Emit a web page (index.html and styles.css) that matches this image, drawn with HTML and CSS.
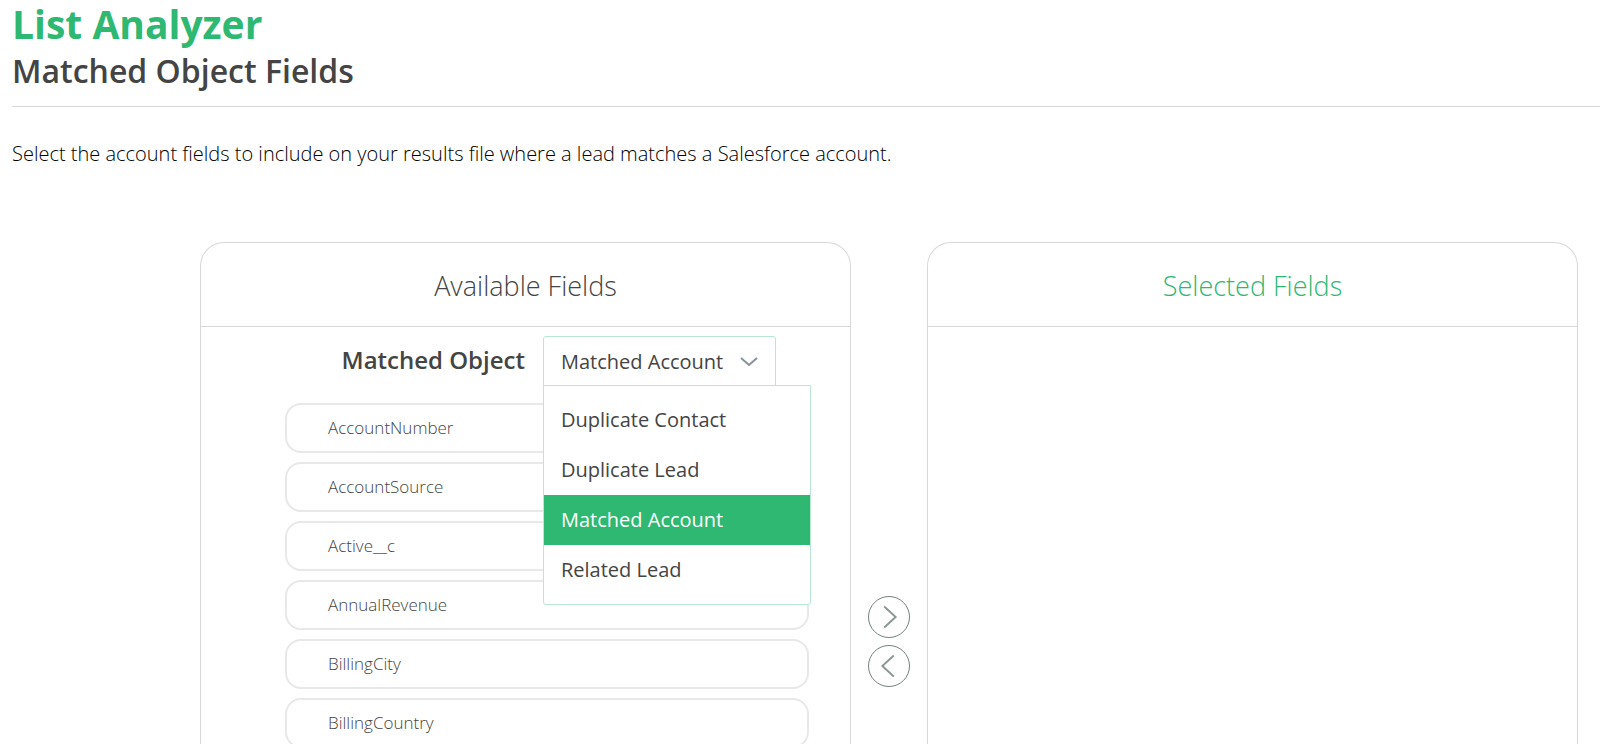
FILE: index.html
```html
<!DOCTYPE html>
<html lang="en">
<head>
    <meta charset="UTF-8">
    <meta name="viewport" content="width=device-width, initial-scale=1.0">
    <title>List Analyzer</title>
    <link rel="stylesheet" href="styles.css">
</head>
<body>

<header class="page-header">
    <h1>List Analyzer</h1>
    <h2>Matched Object Fields</h2>
</header>

<p class="intro">Select the account fields to include on your results file where a lead matches a Salesforce account.</p>

<main class="picker">
    <section class="panel">
        <h3>Available Fields</h3>
        <div class="object-row">
            <label for="matched-object">Matched Object</label>
            <div class="dropdown">
                <select id="matched-object">
                    <option>Duplicate Contact</option>
                    <option>Duplicate Lead</option>
                    <option selected>Matched Account</option>
                    <option>Related Lead</option>
                </select>
                <svg class="chevron" viewBox="0 0 18 10" aria-hidden="true"><path d="M1 1l8 7 8-7"/></svg>
                <ul class="dropdown-menu">
                    <li><button type="button">Duplicate Contact</button></li>
                    <li><button type="button">Duplicate Lead</button></li>
                    <li><button type="button" class="active">Matched Account</button></li>
                    <li><button type="button">Related Lead</button></li>
                </ul>
            </div>
        </div>
        <ul class="field-list">
            <li>AccountNumber</li>
            <li>AccountSource</li>
            <li>Active__c</li>
            <li>AnnualRevenue</li>
            <li>BillingCity</li>
            <li>BillingCountry</li>
        </ul>
    </section>

    <div class="move-buttons">
        <button type="button" aria-label="Add field">
            <svg viewBox="0 0 42 42"><path d="M16 10l12 11-12 11"/></svg>
        </button>
        <button type="button" aria-label="Remove field">
            <svg viewBox="0 0 42 42"><path d="M26 10L14 21l12 11"/></svg>
        </button>
    </div>

    <section class="panel selected">
        <h3>Selected Fields</h3>
    </section>
</main>

<script>
    const select = document.getElementById('matched-object');
    const menu = document.querySelector('.dropdown-menu');

    menu.addEventListener('click', function (e) {
        const option = e.target.closest('button');
        if (option) {
            menu.querySelector('.active').classList.remove('active');
            option.classList.add('active');
            select.value = option.textContent;
        }
    });
</script>

</body>
</html>
```
FILE: styles.css
```css
* {
    box-sizing: border-box;
}
body {
    display: flex;
    flex-direction: column;
    height: 100vh;
    margin: 0;
    overflow: hidden;
    font-family: "Open Sans", sans-serif;
    color: #444;
    background: white;
}
h1, h2, h3, p, ul {
    margin: 0;
    padding: 0;
    font-weight: 300;
}
ul {
    list-style: none;
}
button, select {
    font: inherit;
    color: inherit;
    background: white;
    cursor: pointer;
}
.page-header {
    margin-left: 12px;
    padding-bottom: 12px;
    border-bottom: 1px solid #d8d8d8;
}
.page-header h1 {
    font-size: 39px;
    font-weight: 700;
    line-height: 48px;
    color: #2eb872;
}
.page-header h2 {
    font-size: 32px;
    font-weight: 600;
    line-height: 46px;
}
.intro {
    margin: 31px 12px 0;
    font-size: 20px;
    line-height: 32px;
    color: #000;
}
.picker {
    display: grid;
    grid-template-columns: 1fr 76px 1fr;
    flex: 1;
    min-height: 0;
    margin: 72px 22px 0 12.5%;
}
.panel {
    border: 1px solid #d8d8d8;
    border-bottom: none;
    border-radius: 24px 24px 0 0;
}
.panel h3 {
    padding: 23px 0 20px;
    border-bottom: 1px solid #d8d8d8;
    font-size: 27px;
    line-height: 40px;
    text-align: center;
}
.panel.selected h3 {
    color: #2eb872;
}
.object-row {
    display: flex;
    justify-content: flex-end;
    gap: 18px;
    margin: 9px 74px 0 0;
}
.object-row label {
    font-size: 24px;
    font-weight: 600;
    line-height: 48px;
}
.dropdown {
    position: relative;
    font-size: 20px;
}
.dropdown select {
    display: block;
    width: 233px;
    height: 50px;
    padding: 0 17px;
    border: 1px solid #b9e8d2;
    border-radius: 3px 3px 0 0;
    outline: none;
    appearance: none;
}
.chevron {
    position: absolute;
    top: 21px;
    right: 18px;
    width: 18px;
    height: 10px;
    pointer-events: none;
}
.chevron path {
    fill: none;
    stroke: #84919a;
    stroke-width: 2;
}
.dropdown-menu {
    position: absolute;
    top: 49px;
    left: 0;
    width: 268px;
    padding: 9px 0;
    background: white;
    border: 1px solid #b9e8d2;
    border-radius: 0 0 3px 3px;
    font-weight: 400;
}
.dropdown-menu button {
    display: block;
    width: 100%;
    height: 50px;
    padding: 0 17px 2px;
    border: none;
    text-align: left;
}
.dropdown-menu button.active {
    color: white;
    background: #2eb872;
}
.field-list {
    display: flex;
    flex-direction: column;
    gap: 9px;
    margin: 17px 41px 0 84px;
}
.field-list li {
    padding: 0 41px;
    border: 2px solid #e8e8e8;
    border-radius: 16px;
    font-size: 17px;
    line-height: 46px;
}
.move-buttons {
    display: flex;
    flex-direction: column;
    align-items: center;
    gap: 7px;
    padding-top: 354px;
}
.move-buttons button {
    width: 42px;
    height: 42px;
    padding: 0;
    border: 1px solid #75827f;
    border-radius: 50%;
}
.move-buttons svg {
    display: block;
    width: 40px;
    height: 40px;
}
.move-buttons path {
    fill: none;
    stroke: #8b9693;
    stroke-width: 2;
}
```
